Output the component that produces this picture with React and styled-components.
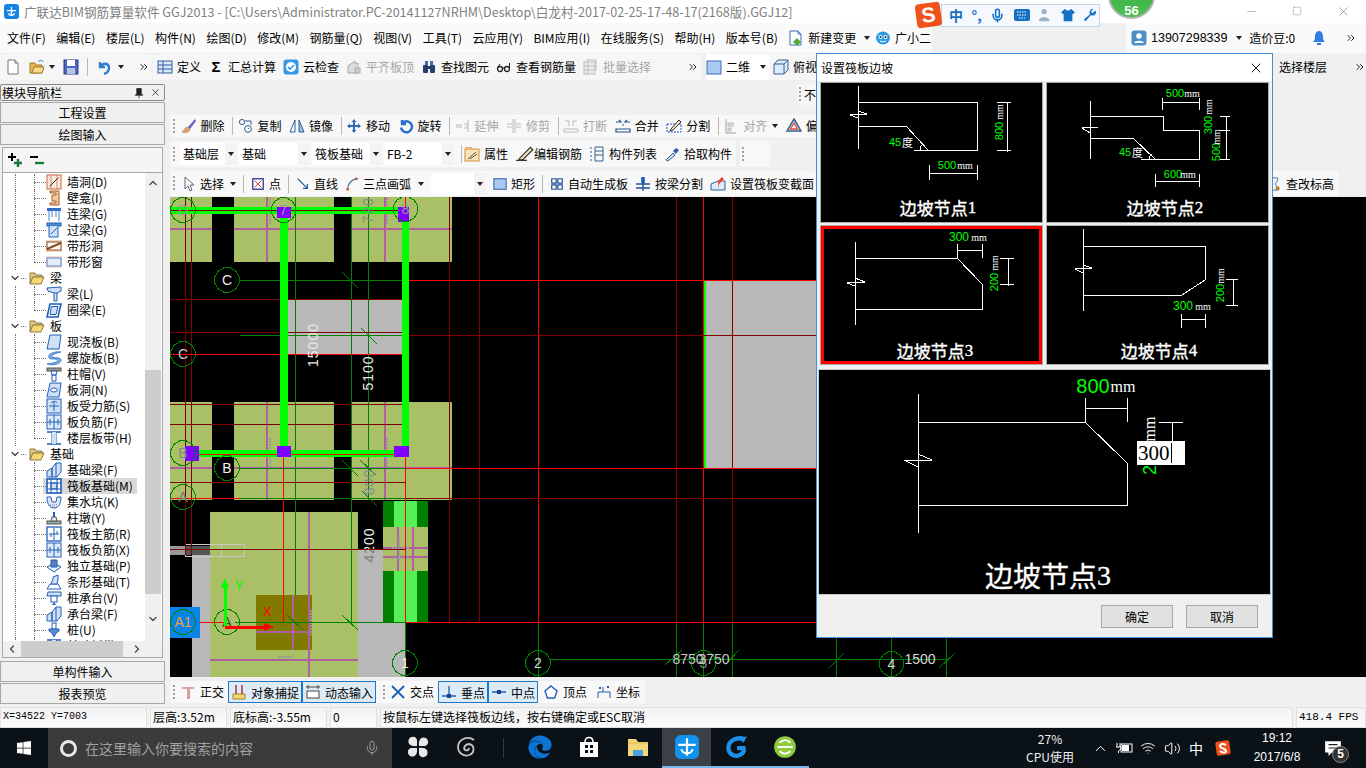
import React from 'react';
import styled, { createGlobalStyle } from 'styled-components';
import { FaWindows, FaEdge } from 'react-icons/fa';
import { Mic, ChevronUp, ChevronDown, ChevronLeft, ChevronRight, Wifi, Volume2, X, Minus, Square, ChevronsRight } from 'lucide-react';

const CJK = '"Noto Sans CJK SC", "Liberation Sans", sans-serif';
const LATIN = '"Liberation Sans", "Noto Sans CJK SC", sans-serif';
const RED = '#ff0000';
const DARK_RED = '#800000';
const AXIS = '#008000';
const LIME = '#00ff00';
const OLIVE = '#a9c066';
const CONCRETE = '#b8b8b8';
const PINK = '#b060a0';

const GlobalStyle = createGlobalStyle`
  html, body {
    margin: 0;
    padding: 0;
    background: #f0f0f0;
    overflow: hidden;
  }
  * {
    box-sizing: border-box;
  }
  body {
    font-family: ${CJK};
    font-size: 12px;
    color: #000;
  }
`;

/* ---------- small drawn icons, 16x16 ---------- */
const blue = '#1f5fb8';
const pale = '#cfe0f7';
const ICONS = {
  newDoc: <><path d="M3 1h7l3 3v11H3z" fill="#fff" stroke="#777" /><path d="M10 1v3h3" fill="#ddd" stroke="#777" /></>,
  open: <><path d="M1 14V4h5l1 2h6v8z" fill="#e8b94a" stroke="#9b7a2c" /><path d="M3 14l2-6h10l-2 6z" fill="#f8dc8a" stroke="#9b7a2c" /><path d="M9 3c2-2 4-2 5 0" fill="none" stroke="#3a6fb8" /></>,
  save: <><rect x="1" y="1" width="14" height="14" fill="#5066c0" stroke="#2a3a80" /><rect x="4" y="1" width="8" height="6" fill="#fff" /><rect x="4" y="9" width="8" height="6" fill="#b8c4e8" /></>,
  undo: <path d="M4 3v5h5M4 8c3-5 9-4 9 1 0 3-2 5-5 6" fill="none" stroke="#2f7fd0" strokeWidth="2.4" />,
  define: <><rect x="1" y="2" width="14" height="12" fill="#dbe8f8" stroke="#315f9e" /><path d="M1 6h14M1 10h14M6 2v12" stroke="#315f9e" /></>,
  cloud: <><rect x="0.5" y="0.5" width="15" height="15" rx="3" fill="#3a96de" /><circle cx="8" cy="8" r="5" fill="#fff" /><path d="M5 8l2 2 4-4" fill="none" stroke="#3a96de" strokeWidth="1.6" /></>,
  flush: <><path d="M2 14V7l7-5v3l3-1v10z" fill="#ddd" stroke="#aaa" /><rect x="9" y="9" width="5" height="5" fill="#ccc" stroke="#aaa" /></>,
  binocular: <><rect x="2" y="6" width="5" height="8" rx="1" fill="#25406f" /><rect x="9" y="6" width="5" height="8" rx="1" fill="#25406f" /><rect x="4" y="2" width="3" height="4" fill="#4a6ea8" /><rect x="9" y="2" width="3" height="4" fill="#4a6ea8" /><rect x="7" y="7" width="2" height="3" fill="#25406f" /></>,
  glasses: <><circle cx="4" cy="10" r="2.5" fill="none" stroke="#222" strokeWidth="1.3" /><circle cx="11" cy="10" r="2.5" fill="none" stroke="#222" strokeWidth="1.3" /><path d="M6 9h3M2 8l2-3M13.5 9.5V4" stroke="#222" fill="none" /></>,
  batch: <><rect x="1" y="3" width="11" height="12" fill="#eee" stroke="#bbb" /><path d="M1 7h11M1 11h11M5 3v12M3 1h10v10" stroke="#bbb" fill="none" /></>,
  twoD: <rect x="1" y="2" width="14" height="13" fill="#a9c8f2" stroke="#4070b8" />,
  cube: <><path d="M1 5l4-4h10v10l-4 4H1z" fill="#dcebf8" stroke="#35608f" /><path d="M1 5h10v10M11 5l4-4" fill="none" stroke="#35608f" /></>,
  change: <><path d="M2 1h8l3 3v11H2z" fill="#fff" stroke="#3a6fb8" /><path d="M10 1v3h3" fill="none" stroke="#3a6fb8" /><path d="M9 8l4 4-4 4-4-4z" fill="#5aa83a" /></>,
  buddy: <><ellipse cx="8" cy="8" rx="7" ry="6.5" fill="#2b9be8" /><circle cx="5.5" cy="7" r="2" fill="#fff" /><circle cx="10.5" cy="7" r="2" fill="#fff" /><circle cx="5.5" cy="7" r="1" fill="#123" /><circle cx="10.5" cy="7" r="1" fill="#123" /><path d="M5 11q3 2 6 0" fill="none" stroke="#fff" /></>,
  user: <><rect x="0.5" y="0.5" width="15" height="15" rx="3" fill="#4a90c8" /><circle cx="8" cy="6" r="2.8" fill="#fff" /><path d="M3 13c1-3 9-3 10 0z" fill="#fff" /></>,
  bell: <><path d="M8 1c3 0 4 3 4 6s1 4 2 5H2c1-1 2-2 2-5s1-6 4-6z" fill="#2f7fe0" /><rect x="6" y="13" width="4" height="2" fill="#2f7fe0" /></>,
  brush: <><path d="M14 1L7 9l2 2 6-8z" fill="#7060c0" /><path d="M7 9c-3 0-3 3-6 5 4 1 8 0 8-3z" fill="#e8a070" stroke="#9a5a30" strokeWidth=".5" /></>,
  copy: <><circle cx="4" cy="4" r="2.6" fill="none" stroke="#35608f" /><circle cx="10" cy="11" r="3.4" fill="none" stroke="#35608f" /><path d="M7 3h6v4" fill="none" stroke="#35608f" /><path d="M10 11l1-1" stroke="#35608f" /></>,
  mirror: <><path d="M1 14L6 2v12z" fill="#fff" stroke="#2e5a98" /><path d="M15 14L10 2v12z" fill="#9cc0ec" stroke="#2e5a98" /></>,
  move: <path d="M8 1l2.4 3H9v3h3V5.6L15 8l-3 2.4V9H9v3h1.4L8 15l-2.4-3H7V9H4v1.4L1 8l3-2.4V7h3V4H5.6z" fill="#2e6cb8" />,
  rotate: <path d="M4 2v4h4M4 5.5a5.5 5.5 0 1 1-1 4" fill="none" stroke="#2a6cd0" strokeWidth="2.4" />,
  extend: <path d="M1 7h6M1 9h6M9 6h3v4H9M13 2v12" fill="none" stroke="#bbb" />,
  trim: <path d="M1 6h5M1 9h5M10 6h5M10 9h5M7 1v14M9 1v14" fill="none" stroke="#bbb" />,
  breakIt: <><path d="M1 11h14v3H1z" fill="none" stroke="#bbb" /><path d="M2 3h4v5M14 3h-4v5" fill="none" stroke="#bbb" /></>,
  merge: <path d="M1 4h5l-2-2M15 4h-5l2-2M1 11h14v3H1zM7 7h2" fill="none" stroke="#28508f" strokeWidth="1.2" />,
  split: <><rect x="1" y="6" width="14" height="8" fill="none" stroke="#2050d8" strokeDasharray="2 1" /><path d="M5 11l8-9 2 2-8 8-3 1z" fill="#f8e8c0" stroke="#333" /></>,
  align: <><path d="M3 1v14h10" fill="none" stroke="#bbb" strokeWidth="1.4" /><rect x="5" y="5" width="5" height="3" fill="#ddd" stroke="#bbb" /><rect x="5" y="10" width="3" height="3" fill="#ddd" stroke="#bbb" /></>,
  offset: <><path d="M8 1l7 12H1z" fill="none" stroke="#35608f" strokeWidth="1.5" /><path d="M8 5l3.5 6h-7z" fill="none" stroke="#d84a3a" strokeWidth="1.3" /></>,
  attrs: <><rect x="1" y="3" width="14" height="12" fill="#f8e4b8" stroke="#d09040" /><path d="M4 13l8-7M6 13l7-5" stroke="#555" /><rect x="1" y="1" width="7" height="3" fill="#e8b86a" /></>,
  pencil: <path d="M1 13h9M4 11l9-9 2 2-8 8-4 1z" fill="#f4e2b8" stroke="#333" />,
  list: <path d="M1 2h2M1 6h2M1 10h2M1 14h2M6 1h8v14H6zM6 5h8M6 9h8" fill="none" stroke="#35608f" />,
  pick: <><path d="M2 14l7-7 2 2-7 6z" fill="#cde" stroke="#35608f" /><path d="M9 5l3-3 3 2-3 4z" fill="#2a5fa0" /></>,
  cursor: <path d="M5 1v12l3-3 2 5 2-1-2-5h4z" fill="#fff" stroke="#667" />,
  point: <><rect x="2" y="2" width="12" height="12" fill="#fff" stroke="#2a3f90" strokeWidth="1.5" /><path d="M4 4l8 8M12 4l-8 8" stroke="#d02030" /></>,
  line: <path d="M2 2l11 11M8 13h5V8" fill="none" stroke="#225f9e" strokeWidth="1.4" />,
  arc: <><path d="M3 14C3 8 7 3 13 2" fill="none" stroke="#35608f" strokeWidth="1.3" /><circle cx="3" cy="14" r="1.5" fill="#d04030" /><circle cx="13" cy="2" r="1.5" fill="#d04030" /></>,
  rect: <rect x="1" y="2" width="14" height="12" fill="#a9c8f2" stroke="#305fae" strokeWidth="1.2" />,
  auto: <path d="M2 2h5v5H2zM9 2h5v5H9zM2 9h5v5H2zM9 9h5v5H9z" fill="none" stroke="#20509a" strokeWidth="1.4" />,
  beamSplit: <><rect x="6" y="1" width="4" height="6" fill="#3a7fd8" /><path d="M1 8h14M1 12h14M8 1v14" stroke="#20509a" strokeWidth="1.4" /></>,
  section: <><path d="M1 8l7-3 7 0v9H1z" fill="#dcebf8" stroke="#2a5fa0" /><path d="M8 12V5l4-4 2 2-5 5" fill="#f04030" /></>,
  level: <><path d="M3 1h8v3L8 8l3 4v3H3" fill="none" stroke="#35608f" /><circle cx="11" cy="13" r="2.4" fill="#c08030" /></>,
  ortho: <path d="M2 3h12v2H10v10H7V5H2z" fill="#d8a0a0" />,
  snap: <><path d="M2 10h12v5H2z" fill="#f0d870" stroke="#a08030" /><path d="M5 1v9M11 1v9" stroke="#a02020" strokeWidth="1.3" /></>,
  dyn: <><path d="M1 3h14M3 1v4M13 1v4" stroke="#444" /><rect x="2" y="7" width="12" height="7" fill="#fff" stroke="#444" /></>,
  cross: <path d="M2 2l12 12M14 2L2 14" stroke="#1f5fb8" strokeWidth="1.8" />,
  perp: <><path d="M1 12h14M8 2v10" stroke="#1f5fb8" strokeWidth="1.3" /><rect x="6" y="10" width="4" height="4" fill="#1f3f90" /></>,
  mid: <><path d="M1 8h14" stroke="#1f5fb8" strokeWidth="1.5" /><rect x="6" y="6" width="4" height="4" fill="#1f3f90" /></>,
  vertex: <path d="M8 2l6 5-2.4 7H4.4L2 7z" fill="#fff" stroke="#1f5fb8" strokeWidth="1.4" />,
  coord: <path d="M2 14V8h5V3M7 8h7M14 8v6M3 3l2 2M5 3L3 5M11 2l2 2M13 2l-2 2" fill="none" stroke="#1f5fb8" />,
  plus: <><path d="M5 1v8M1 5h8" stroke="#000" strokeWidth="2" /><path d="M11 7v8M7 11h8" stroke="#1a7a3a" strokeWidth="2.4" /></>,
  minus: <><path d="M1 5h8" stroke="#000" strokeWidth="2" /><path d="M6 11h9" stroke="#1a7a3a" strokeWidth="2.4" /></>,
  pin: <path d="M5 2h6v7l2 2H3l2-2zM8 11v4" fill="#222" stroke="#222" />,
  wallHole: <><rect x="1" y="1" width="14" height="14" fill="#fde8dc" stroke="#c8663a" /><path d="M3 13L13 3M5 1v14M11 1v14" stroke="#c8663a" strokeWidth=".7" /><path d="M4 12l8-8" stroke="#333" /></>,
  niche: <path d="M4 1h9v14H4v-2h6v-2H6V5h4V3H4z" fill="#f5c8a0" stroke="#a85a20" />,
  linkBeam: <><rect x="1" y="2" width="14" height="3" fill="#2f6fc8" /><path d="M3 5v10M13 5v10M6 5v6M10 5v6" stroke="#6fa0e0" strokeWidth="1.3" /></>,
  lintel: <><rect x="1" y="1" width="14" height="3" fill="#4f8fe0" stroke={blue} /><path d="M3 4v11h9V4" fill={pale} stroke={blue} /><path d="M5 12l6-6" stroke={blue} /></>,
  stripHole: <><rect x="0" y="2" width="16" height="12" fill="#f2d8c4" /><rect x="1" y="4" width="14" height="8" fill="#fff" stroke="#8a4a20" /><path d="M1 11L15 5" stroke="#8a4a20" strokeWidth="2" /></>,
  stripWin: <><rect x="0" y="2" width="16" height="12" fill="#f8dcd8" /><rect x="1" y="4" width="14" height="8" fill="#e4edfb" stroke="#5a80d8" /></>,
  beam: <><path d="M1 2l14-1v4l-4 2v8H8V7L2 5z" fill={pale} stroke={blue} /><path d="M8 7h3" stroke={blue} /></>,
  ring: <><path d="M4 2h11l-3 13H1z" fill="#fff" stroke={blue} strokeWidth="1.6" /><path d="M5.5 4.5h6.5L10 12.5H4z" fill={pale} stroke={blue} /></>,
  slab: <path d="M4 1h11l-2 14H1z" fill={pale} stroke={blue} />,
  spiral: <path d="M15 2C8 1 1 4 3 8c1 2 8 0 9 2 0 2-5 3-11 4 6 2 14 0 14-4 0-3-7-2-9-3-1-2 4-4 9-5z" fill="#7ab0ea" stroke={blue} strokeWidth=".7" />,
  capital: <><rect x="1" y="2" width="14" height="3" fill="#9a9a9a" stroke="#555" /><path d="M5 5h6l-1 4H6zM6 9h4v6H6z" fill="#fff" stroke={blue} /></>,
  slabHole: <><path d="M4 1h11l-2 14H1z" fill={pale} stroke={blue} /><ellipse cx="8" cy="8" rx="3.4" ry="2" fill="#fff" stroke={blue} /></>,
  rebar: <><rect x="1" y="1" width="14" height="14" fill={pale} stroke={blue} /><path d="M8 3v10M3 8h10M5 5c2-2 6-2 6 0" fill="none" stroke={blue} /></>,
  negBar: <><rect x="1" y="1" width="14" height="14" fill="#dfeafb" stroke={blue} /><path d="M1 8h14M8 1v14M4 5v6M12 5v6" stroke={blue} /></>,
  band: <><path d="M1 2h14M1 14h14" stroke={blue} strokeWidth="1.4" /><path d="M6 2v12M10 2v12" stroke={blue} /><rect x="6" y="2" width="4" height="12" fill={pale} /></>,
  footBeam: <><path d="M1 15V9l5-3v9zM6 15V6l4-5h5v9l-4 5z" fill={pale} stroke={blue} /><path d="M10 1v14" stroke={blue} /></>,
  raft: <><rect x="1" y="1" width="14" height="14" fill="#fff" stroke={blue} strokeWidth="1.6" /><rect x="5" y="5" width="6" height="6" fill={pale} stroke={blue} /><path d="M1 5h14M1 11h14M5 1v14M11 1v14" stroke={blue} /></>,
  sump: <><path d="M1 3h4l1 5h4l1-5h4c0 6-2 11-7 11S1 9 1 3z" fill="#dce8f8" stroke={blue} /><path d="M4 11h8M6 13h4" stroke="#777" strokeDasharray="1 1" /></>,
  pier: <><rect x="1" y="11" width="14" height="3" fill="#9aa" stroke="#555" /><path d="M5 11l1-4h4l1 4z" fill="#eee" stroke="#555" /><rect x="7" y="2" width="2" height="5" fill={blue} /></>,
  mainBar: <><rect x="1" y="1" width="14" height="14" fill="#fff" stroke={blue} strokeWidth="1.3" /><path d="M8 2v12M3 8h10M5 8v3M11 5v3" stroke={blue} /></>,
  isolated: <><path d="M1 9l7-4 7 4-7 5z" fill="#e8eef8" stroke={blue} /><path d="M5 2h6v7H5z" fill="#5a7fb8" stroke={blue} /></>,
  strip: <><path d="M1 15l3-5h8l3 5z" fill="#fff" stroke={blue} /><path d="M5 10l2-5V3l5-2v4l-1 5z" fill={pale} stroke={blue} /></>,
  cap: <><path d="M2 2h13v4H1z" fill={pale} stroke={blue} /><rect x="5" y="6" width="6" height="6" fill="#fff" stroke={blue} /><path d="M8 12l-2 3h4z" fill={blue} /></>,
  pile: <><rect x="6" y="1" width="4" height="6" fill="#fff" stroke={blue} /><path d="M3 7h10v2l-3 2-2 4-2-4-3-2z" fill="#5a8fd8" stroke={blue} /></>,
};

const Ico = ({ name, size = 16 }) => (
  <IcoSvg viewBox="0 0 16 16" width={size} height={size}>{ICONS[name]}</IcoSvg>
);

const IcoSvg = styled.svg`
  display: block;
  flex: none;
`;

/* ---------- window chrome ---------- */
const Page = styled.div`
  position: relative;
  width: 1366px;
  height: 768px;
  overflow: hidden;
  display: flex;
  flex-direction: column;
  background: #f0f0f0;
`;

const TitleBar = styled.header`
  height: 23px;
  flex: none;
  display: flex;
  align-items: center;
  background: #fff;
  padding-left: 4px;
  color: #808080;
  line-height: 23px;
  white-space: nowrap;
`;

const AppLogo = styled.span`
  width: 15px;
  height: 15px;
  margin-right: 5px;
  border-radius: 3px;
  background: #1384e8;
  display: flex;
  align-items: center;
  justify-content: center;
`;

const TitleText = styled.span`
  font-size: 12.6px;
`;

const WinControls = styled.div`
  position: absolute;
  top: 0;
  right: 0;
  display: flex;
  color: #777;
`;

const WinControl = styled.span`
  width: 46px;
  height: 22px;
  display: flex;
  align-items: center;
  justify-content: center;
`;

const MenuBar = styled.nav`
  height: 30px;
  flex: none;
  display: flex;
  align-items: stretch;
  justify-content: space-between;
  white-space: nowrap;
  line-height: 16px;
  background: #f0f0f0;
`;

const MenuLeft = styled.div`
  width: 932px;
  display: flex;
  align-items: center;
  gap: 10.5px;
  padding-left: 7px;
  background: #fafafa;
`;

const MenuItem = styled.span`
  display: flex;
  align-items: center;
  gap: 4px;
  margin-right: ${p => p.$mr ?? 0}px;
`;

const MenuRight = styled.div`
  display: flex;
  align-items: center;
  gap: 4px;
  padding: 0 9px 0 5px;
  width: 240px;
  background: #fafafa;
`;

const Caret = styled.i`
  flex: none;
  width: 0;
  height: 0;
  margin-left: ${p => p.$ml ?? 6}px;
  border-left: 3px solid transparent;
  border-right: 3px solid transparent;
  border-top: 4px solid #222;
`;

const Phone = styled.span`
  font-family: ${LATIN};
  font-size: 12.5px;
`;

const More = styled(ChevronsRight)`
  flex: none;
  margin-left: auto;
  color: #222;
`;

const TopTools = styled.div`
  height: 28px;
  flex: none;
  display: flex;
  align-items: center;
  white-space: nowrap;
`;

const TopBand = styled.div`
  height: 26px;
  width: ${p => p.$w}px;
  flex: none;
  margin-left: ${p => p.$ml ?? 0}px;
  display: flex;
  align-items: center;
  gap: ${p => p.$gap ?? 7}px;
  padding-left: ${p => p.$pl ?? 4}px;
  padding-right: 2px;
  background: #f6f6f6;
  border-radius: 3px;
`;

const Tool = styled.span`
  display: flex;
  flex: none;
  align-items: center;
  gap: ${p => p.$gap ?? 4}px;
  height: ${p => (p.$boxed ? 26 : 20)}px;
  line-height: 20px;
  margin-left: ${p => p.$ml ?? 0}px;
  padding-right: ${p => (p.$boxed ? 3 : 0)}px;
  background: ${p => (p.$boxed ? '#fff' : 'transparent')};
  color: ${p => (p.$off ? '#a6a6a6' : '#000')};
`;

const Sigma = styled.b`
  width: 16px;
  font-family: ${LATIN};
  font-size: 15px;
  text-align: center;
`;

const Sep = styled.i`
  flex: none;
  width: 1px;
  height: 18px;
  margin-right: ${p => p.$mr ?? 0}px;
  background: #b9b9b9;
`;

const Grip = styled.i`
  flex: none;
  width: 2px;
  height: 15px;
  margin: 0 ${p => p.$mr ?? -2}px 0 ${p => p.$ml ?? 2}px;
  background: repeating-linear-gradient(to bottom, #a0a0a0 0 2px, transparent 2px 4px);
`;

/* ---------- layout of the main area ---------- */
const Main = styled.div`
  height: 625px;
  flex: none;
  display: flex;
`;

const LeftPanel = styled.aside`
  width: 165px;
  flex: none;
  display: flex;
  flex-direction: column;
  padding-top: 3px;
`;

const PanelHead = styled.div`
  height: 17px;
  flex: none;
  display: flex;
  align-items: center;
  padding: 0 3px 0 1px;
  gap: 5px;
  border: 1px solid #8a8a8a;
  border-radius: 2px;
  line-height: 15px;
`;

const PanelTitle = styled.span`
  margin-right: auto;
`;

const NavButton = styled.div`
  height: 21px;
  flex: none;
  margin-top: ${p => p.$mt ?? 1}px;
  border: 1px solid #a8a8a8;
  background: #f0f0f0;
  text-align: center;
  line-height: 19px;
`;

const TreeBox = styled.div`
  height: 511px;
  flex: none;
  margin: 2px 2px 0;
  display: flex;
  flex-direction: column;
  border: 1px solid #a8a8a8;
`;

const TreeTools = styled.div`
  height: 24px;
  flex: none;
  display: flex;
  align-items: center;
  gap: 6px;
  padding-left: 4px;
  background: #f5f5f5;
`;

const TreeArea = styled.div`
  flex: 1;
  min-height: 0;
  display: flex;
  background: #fff;
  border-top: 1px solid #a8a8a8;
`;

const TreeList = styled.ul`
  flex: 1;
  margin: 0;
  padding: 1px 0 0;
  list-style: none;
  overflow: hidden;
`;

const TreeRow = styled.li`
  position: relative;
  height: 16px;
  display: flex;
  align-items: center;
  padding-left: ${p => (p.$group ? 23 : 40)}px;
  line-height: 16px;
  white-space: nowrap;

  &::before {
    content: '';
    position: absolute;
    left: ${p => (p.$group ? 18 : 31)}px;
    top: 8px;
    width: ${p => (p.$group ? 5 : 12)}px;
    border-top: 1px dotted #777;
  }

  &::after {
    content: '';
    position: absolute;
    left: 31px;
    top: 0;
    height: ${p => (p.$last ? 8 : 16)}px;
    border-left: ${p => (p.$group ? 'none' : '1px dotted #777')};
  }
`;

const RootLine = styled.i`
  position: absolute;
  left: 12px;
  top: 0;
  height: 16px;
  border-left: 1px dotted #777;
`;

const Expander = styled(ChevronDown)`
  position: absolute;
  left: 6px;
  top: 2px;
  color: #444;
`;

const RowBody = styled.span`
  display: flex;
  align-items: center;
  gap: 5px;
  height: 16px;
  padding: 0 4px 0 3px;
  background: ${p => (p.$on ? '#d9d9d9' : 'transparent')};
`;

const Folder = styled.svg`
  flex: none;
  display: block;
`;

const VScroll = styled.div`
  width: 16px;
  flex: none;
  margin-right: 1px;
  display: flex;
  flex-direction: column;
  background: #f0f0f0;
  color: #555;
`;

const ScrollArrow = styled.span`
  height: ${p => p.$size}px;
  width: ${p => (p.$wide ? `${p.$wide}px` : 'auto')};
  flex: none;
  display: flex;
  align-items: center;
  justify-content: center;
`;

const VThumb = styled.div`
  height: 224px;
  flex: none;
  margin-top: 177px;
  background: #cdcdcd;
`;

const HScroll = styled.div`
  height: 16px;
  flex: none;
  display: flex;
  align-items: center;
  background: #f0f0f0;
  color: #555;
`;

const HThumb = styled.div`
  width: 102px;
  height: 16px;
  background: #cdcdcd;
`;

const WorkArea = styled.section`
  flex: 1;
  min-width: 0;
  margin-left: 5px;
  display: flex;
  flex-direction: column;
  white-space: nowrap;
`;

const StubRow = styled.div`
  height: 21px;
  flex: none;
  margin: 3px 0 10px 627px;
  width: 30px;
  display: flex;
  align-items: center;
  background: #f6f6f6;
`;

const ToolRow = styled.div`
  height: ${p => p.$h}px;
  flex: none;
  margin-top: ${p => p.$mt ?? 4}px;
  display: flex;
  align-items: stretch;
  justify-content: space-between;
  gap: 4px;
  padding-right: ${p => p.$pr ?? 0}px;
`;

const Band = styled.div`
  width: ${p => (p.$w ? `${p.$w}px` : 'auto')};
  flex: none;
  display: flex;
  align-items: center;
  gap: ${p => p.$gap ?? 7}px;
  padding-left: 1px;
  padding-right: 4px;
  background: #f8f8f8;
  border-radius: 3px;
`;

const Combo = styled.div`
  width: ${p => p.$w}px;
  height: 22px;
  flex: none;
  margin-right: ${p => p.$mr ?? 0}px;
  margin-left: ${p => p.$ml ?? 0}px;
  display: flex;
  align-items: center;
  justify-content: space-between;
  padding-left: 3px;
  background: #fff;
  line-height: 22px;
`;

const ComboArrow = styled.span`
  width: 12px;
  height: 22px;
  display: flex;
  align-items: center;
  justify-content: center;
  background: #f3f3f3;
`;

const ToolRowSpacer = styled.div`
  flex: 1;
`;

const StubBand = styled.div`
  width: 30px;
  flex: none;
  background: #f8f8f8;
  border-radius: 3px;
  display: flex;
  align-items: center;
`;

const CanvasWrap = styled.div`
  height: 480px;
  flex: none;
  margin-top: 1px;
  background: #000;
`;

const CanvasSvg = styled.svg`
  display: block;
  shape-rendering: crispEdges;
`;

const BottomBand = styled.div`
  height: 22px;
  width: 475px;
  flex: none;
  margin-top: 4px;
  display: flex;
  align-items: center;
  gap: 4px;
  padding-left: 1px;
  background: #f8f8f8;
`;

const Toggle = styled.span`
  display: flex;
  align-items: center;
  gap: 4px;
  height: 22px;
  padding: 0 2px;
  border: 1px solid #1979c9;
  background: #dcebf7;
  margin-right: ${p => p.$mr ?? -4}px;
`;

/* ---------- status + taskbar ---------- */
const StatusBar = styled.footer`
  height: 21px;
  flex: none;
  margin-top: 1px;
  display: flex;
  gap: 3px;
  white-space: nowrap;
`;

const StatusCell = styled.div`
  width: ${p => (p.$w ? `${p.$w}px` : 'auto')};
  flex: ${p => (p.$w ? 'none' : 1)};
  padding-left: 2px;
  border: 1px solid #e0e0e0;
  background: linear-gradient(#f2f2f2, #fcfcfc);
  line-height: 18px;
  font-size: ${p => p.$size ?? 12}px;
  font-family: ${p => (p.$mono ? '"Liberation Mono", monospace' : CJK)};
`;

const TaskBar = styled.div`
  height: 40px;
  flex: none;
  display: flex;
  align-items: stretch;
  background: #0a1218;
  color: #fff;
`;

const StartSlot = styled.div`
  width: 48px;
  flex: none;
  display: flex;
  align-items: center;
  justify-content: center;
`;

const SearchBox = styled.div`
  width: 344px;
  flex: none;
  margin-right: 1px;
  display: flex;
  align-items: center;
  padding: 0 12px;
  gap: 8px;
  background: #3b3b3b;
  color: #a0a0a0;
  font-size: 14px;
`;

const Cortana = styled.i`
  width: 17px;
  height: 17px;
  flex: none;
  border: 3px solid #e8e8e8;
  border-radius: 50%;
`;

const SearchText = styled.span`
  flex: 1;
`;

const TaskSlot = styled.div`
  width: 49px;
  flex: none;
  display: flex;
  align-items: center;
  justify-content: center;
  border-bottom: 2px solid ${p => (p.$open ? '#79b8ee' : 'transparent')};
  background: ${p => (p.$active ? '#3a4046' : 'transparent')};
`;

const TaskDivider = styled.div`
  width: 24px;
  flex: none;
  display: flex;
  align-items: center;
  justify-content: center;

  &::before {
    content: '';
    width: 1px;
    height: 20px;
    background: #3a3a3a;
  }
`;

const Tray = styled.div`
  margin-left: auto;
  display: flex;
  align-items: center;
`;

const CpuMeter = styled.div`
  width: 60px;
  margin-right: 8px;
  text-align: center;
  line-height: 18px;
  font-size: 12px;
  color: #f0f0f0;
`;

const TrayCell = styled.span`
  width: ${p => p.$w ?? 24}px;
  height: 40px;
  flex: none;
  display: flex;
  align-items: center;
  justify-content: center;
  font-size: 14px;
`;

const Clock = styled.div`
  width: 80px;
  flex: none;
  text-align: center;
  line-height: 19px;
  font-size: 12px;
  font-family: ${LATIN};
`;

const Notify = styled.div`
  position: relative;
  width: 49px;
  height: 40px;
  flex: none;
  display: flex;
  align-items: center;
  justify-content: center;
  padding-right: 18px;
`;

const NotifyBadge = styled.span`
  position: absolute;
  left: 15px;
  top: 18px;
  width: 17px;
  height: 17px;
  border-radius: 50%;
  background: #333;
  border: 1px solid #888;
  font-family: ${LATIN};
  font-size: 12px;
  font-weight: 700;
  line-height: 15px;
  text-align: center;
`;

/* ---------- overlays ---------- */
const ImeBar = styled.div`
  position: absolute;
  left: 916px;
  top: 3px;
  display: flex;
  align-items: center;
  height: 24px;
`;

const ImeLogo = styled.span`
  width: 25px;
  height: 24px;
  border-radius: 4px;
  background: #f0521c;
  color: #fff;
  font: 700 21px/24px ${LATIN};
  text-align: center;
  transform: rotate(-8deg);
  z-index: 1;
`;

const ImeTray = styled.div`
  width: 159px;
  height: 23px;
  display: flex;
  align-items: center;
  gap: 8.5px;
  padding-left: 7px;
  background: #f5f8fc;
  border: 1px solid #c5d5e8;
  color: #1671c4;
  font-size: 14px;
  font-weight: 700;
`;

const ScoreBall = styled.div`
  position: absolute;
  left: 1108px;
  top: -28px;
  width: 47px;
  height: 47px;
  border-radius: 50%;
  background: linear-gradient(#2ea84a, #4dc04e);
  border: 2px solid #b5b5b5;
  color: #fff;
  font: 700 13px/74px ${LATIN};
  text-align: center;
`;

const Dialog = styled.div`
  position: absolute;
  left: 816px;
  top: 53px;
  width: 457px;
  height: 585px;
  display: flex;
  flex-direction: column;
  background: #f0f0f0;
  border: 1px solid #3f8fdc;
`;

const DialogTitle = styled.div`
  height: 27px;
  flex: none;
  display: flex;
  align-items: center;
  justify-content: space-between;
  padding: 0 8px 0 4px;
  background: #fff;
  line-height: 27px;
  font-size: 12px;
`;

const NodeGrid = styled.div`
  flex: none;
  display: grid;
  grid-template-columns: 221px 221px;
  grid-template-rows: 139px 138px;
  column-gap: 5px;
  row-gap: 4px;
  padding: 2px 0 0 4px;
`;

const NodeCard = styled.div`
  background: #000;
  outline: 1px solid #a9a9a9;
  border: ${p => (p.$on ? `3px solid ${RED}` : 'none')};
  overflow: hidden;
`;

const NodeSvg = styled.svg`
  display: block;
  shape-rendering: crispEdges;
`;

const Preview = styled.div`
  position: relative;
  height: 224px;
  flex: none;
  margin: 6px 2px 0;
  background: #000;
  outline: 1px solid #c8c8c8;
`;

const SizeInput = styled.div`
  position: absolute;
  left: 318px;
  top: 71px;
  width: 48px;
  height: 24px;
  background: #fff;
  color: #000;
  font: 21px/24px "Liberation Serif", serif;
  padding-left: 1px;
  display: flex;
  align-items: center;
`;

const InputCaret = styled.i`
  width: 1px;
  height: 20px;
  margin-left: 1px;
  background: #000;
`;

const DialogFoot = styled.div`
  flex: 1;
  display: flex;
  justify-content: flex-end;
  gap: 13px;
  padding: 11px 14px 0 0;
`;

const DialogButton = styled.button`
  width: 72px;
  height: 23px;
  padding: 0;
  border: 1px solid #a8a8a8;
  background: #e1e1e1;
  font: 12px/21px ${CJK};
  color: #000;
`;

/* ---------- CAD canvas data (page coordinates) ---------- */
const olive = [
  [170, 197, 42, 65], [234, 197, 100, 65], [352, 197, 100, 65],
  [170, 402, 42, 98], [234, 402, 100, 98], [352, 402, 100, 98],
  [210, 512, 148, 166],
];
const concrete = [
  [192, 555, 18, 123], [358, 549, 47, 129], [288, 299, 114, 55], [703, 280, 113, 188],
];
const pinkLines = [
  [170, 229, 212, 229], [234, 229, 334, 229], [352, 229, 452, 229], [267, 197, 267, 262], [385, 197, 385, 262],
  [170, 468, 212, 468], [234, 468, 334, 468], [352, 468, 452, 468], [267, 402, 267, 500], [385, 402, 385, 500],
  [210, 660, 358, 660], [309, 512, 309, 678], [293, 595, 293, 650], [256, 632, 312, 632],
  [398, 527, 398, 571], [413, 527, 413, 571], [383, 548, 428, 548], [383, 557, 428, 557],
];
const thinLines = [
  [185, 197, 185, 555, DARK_RED], [191.5, 197, 191.5, 555, DARK_RED],
  [283.5, 214, 283.5, 622, RED], [295.5, 197, 295.5, 595, AXIS],
  [351, 197, 351, 622, AXIS], [368, 197, 368, 500, AXIS],
  [405.5, 197, 405.5, 622, RED], [405.5, 622, 405.5, 677, AXIS],
  [449.5, 197, 449.5, 622, DARK_RED], [479, 197, 479, 622, DARK_RED],
  [538.5, 197, 538.5, 622, RED], [538.5, 622, 538.5, 677, AXIS],
  [676.5, 197, 676.5, 622, DARK_RED], [676.5, 622, 676.5, 677, AXIS],
  [703.5, 197, 703.5, 622, RED], [703.5, 622, 703.5, 677, AXIS],
  [732, 197, 732, 622, DARK_RED], [732, 622, 732, 677, AXIS],
  [836.5, 622, 836.5, 677, AXIS], [891.5, 622, 891.5, 677, AXIS], [946.5, 622, 946.5, 677, AXIS],
  [239, 280, 406, 280, AXIS], [406, 280, 816, 280, RED],
  [170, 299, 406, 299, DARK_RED], [170, 332, 406, 332, DARK_RED],
  [240, 335, 406, 335, AXIS], [406, 335, 816, 335, DARK_RED],
  [170, 354, 406, 354, RED], [170, 404, 406, 404, DARK_RED], [170, 424, 406, 424, DARK_RED],
  [238, 468, 406, 468, AXIS], [406, 468, 816, 468, RED],
  [170, 482, 406, 482, DARK_RED],
  [170, 498, 240, 498, RED], [240, 498, 406, 498, AXIS], [406, 498, 816, 498, DARK_RED],
  [170, 549, 406, 549, DARK_RED],
  [170, 622, 225, 622, RED], [235, 622, 406, 622, AXIS], [406, 622, 816, 622, RED],
  [550, 659, 946, 659, AXIS],
];
const ticks = [
  [342, 272, 358, 288], [361, 328, 377, 344], [342, 460, 358, 476], [360, 460, 376, 475], [362, 491, 377, 506],
  [287, 615, 303, 630], [342, 615, 358, 630], [665, 665, 682, 650], [725, 665, 739, 650],
  [829, 668, 844, 653], [939, 668, 955, 653],
];
const bubbles = [
  [183, 210, 'D', '#9a9a9a'], [283.5, 210, '7', '#999'], [405.5, 209, '8', '#999'],
  [227, 280, 'C', '#e8e8e8'], [183, 354, 'C', '#c8c8c8'], [183, 453, 'B', '#888'],
  [227, 468, 'B', '#f0f0f0'], [183, 497, 'A', '#777'], [183, 622, 'A1', '#f0a030'],
  [227, 622, 'A', '#444'], [405, 663, '1', '#f0f0f0'], [538, 663, '2', '#d8d8d8'],
  [703.5, 663, '3', '#888'], [891.5, 664, '4', '#d8d8d8'],
];
const dimTexts = [
  [313, 345, '15000', 1, '#e8e8e8'], [368, 373, '5100', 1, '#e8e8e8'], [368, 206, '7200', 1, '#8a8a8a'],
  [369, 482, '800', 1, '#8a8a9a'],
  [688, 659, '8750', 0, '#c8c8c8'], [714, 659, '3750', 0, '#c8c8c8'], [920, 659, '1500', 0, '#d8d8d8'],
];

const gonPoints = (cx, cy, r) => Array.from({ length: 12 }, (_, i) => {
  const a = (Math.PI * i) / 6 + Math.PI / 12;
  return `${(cx + r * Math.cos(a)).toFixed(1)},${(cy + r * Math.sin(a)).toFixed(1)}`;
}).join(' ');

const Line = ({ d }) => (
  <line x1={d[0]} y1={d[1]} x2={d[2]} y2={d[3]} stroke={d[4]} strokeWidth="1" />
);

const DimText = ({ x, y, fill, children }) => (
  <text
    x={x}
    y={y}
    fill={fill}
    fontFamily="Liberation Sans"
    fontSize="14"
    letterSpacing="1"
    textAnchor="middle"
    dominantBaseline="central"
    transform={`rotate(-90 ${x} ${y})`}
  >
    {children}
  </text>
);

const CadCanvas = () => (
  <CanvasSvg viewBox="170 197 1196 480" width="1196" height="480">
    <defs>
      <clipPath id="belowSill"><rect x="358" y="549" width="25" height="30" /></clipPath>
    </defs>
    {olive.map((r, i) => <rect key={i} x={r[0]} y={r[1]} width={r[2]} height={r[3]} fill={OLIVE} />)}
    {concrete.map((r, i) => <rect key={i} x={r[0]} y={r[1]} width={r[2]} height={r[3]} fill={CONCRETE} />)}
    <rect x="703" y="280" width="3" height="188" fill={LIME} />
    <rect x="256" y="595" width="56" height="55" fill="#807a00" />
    <rect x="383" y="501" width="45" height="26" fill={AXIS} />
    <rect x="394" y="501" width="23" height="26" fill="#55f055" />
    <rect x="383" y="527" width="45" height="44" fill={OLIVE} />
    <rect x="383" y="571" width="45" height="51" fill={AXIS} />
    <rect x="394" y="571" width="23" height="51" fill="#55f055" />
    <rect x="170" y="546" width="15" height="9" fill="#999" />
    <rect x="185" y="546" width="25" height="9" fill="#555" />
    <rect x="185" y="544" width="36" height="12" fill="none" stroke="#c8c8c8" />
    <rect x="221" y="544" width="23" height="12" fill="none" stroke="#c8c8c8" />
    {pinkLines.map((p, i) => <line key={i} x1={p[0]} y1={p[1]} x2={p[2]} y2={p[3]} stroke={PINK} strokeWidth="1.5" />)}
    <path d="M269.5 198v27M387 198v27M269.5 438v30M387 438v30M311 610v25M278 657h14M399 535v30M392 548h18M392 558h18" stroke="#999" strokeWidth="2" strokeDasharray="2 1" fill="none" />
    {thinLines.map((d, i) => <Line key={i} d={d} />)}
    {ticks.map((t, i) => <line key={i} x1={t[0]} y1={t[1]} x2={t[2]} y2={t[3]} stroke={AXIS} />)}
    <rect x="280" y="212" width="8" height="238" fill={LIME} />
    <rect x="402" y="212" width="7" height="238" fill={LIME} />
    <rect x="170" y="207" width="236" height="7" fill={LIME} />
    <rect x="186" y="450" width="220" height="7" fill={LIME} />
    <line x1="170" y1="210.5" x2="406" y2="210.5" stroke={DARK_RED} />
    <line x1="186" y1="454" x2="406" y2="454" stroke={RED} />
    <rect x="277" y="207" width="14" height="11" fill="#8000ff" />
    <rect x="398" y="207" width="11" height="15" fill="#8000ff" />
    <rect x="277" y="446" width="14" height="11" fill="#8000ff" />
    <rect x="394" y="446" width="15" height="11" fill="#8000ff" />
    <rect x="185" y="446" width="14" height="15" fill="#8000ff" />
    <rect x="170" y="607" width="30" height="31" fill="#0a84e8" />
    {bubbles.map((b, i) => (
      <g key={i}>
        <polygon points={gonPoints(b[0], b[1], 12.5)} fill="none" stroke={AXIS} />
        <text x={b[0]} y={b[1] + 5} fill={b[3]} fontFamily="Liberation Sans" fontSize="14" textAnchor="middle">{b[2]}</text>
      </g>
    ))}
    {dimTexts.map((t, i) => (t[3]
      ? <DimText key={i} x={t[0]} y={t[1]} fill={t[4]}>{t[2]}</DimText>
      : <text key={i} x={t[0]} y={t[1]} fill={t[4]} fontFamily="Liberation Sans" fontSize="14" textAnchor="middle" dominantBaseline="central">{t[2]}</text>))}
    <DimText x={369} y={545} fill="#f0f0f0">4200</DimText>
    <g clipPath="url(#belowSill)">
      <rect x="358" y="549" width="25" height="30" fill={CONCRETE} />
      <DimText x={369} y={545} fill="#808080">4200</DimText>
    </g>
    <path d="M225 627V586" stroke={LIME} strokeWidth="3" />
    <path d="M225 578l4 10h-8z" fill={LIME} />
    <path d="M225 627h40" stroke={RED} strokeWidth="3" />
    <path d="M274 627l-10-4v8z" fill={RED} />
    <text x="239" y="590" fill={LIME} fontFamily="Liberation Sans" fontSize="13" textAnchor="middle">Y</text>
    <text x="267" y="616" fill={RED} fontFamily="Liberation Sans" fontSize="13" textAnchor="middle">X</text>
    <path d="M358 549h25" stroke={DARK_RED} />
  </CanvasSvg>
);

/* ---------- slope node drawings ---------- */
const Cad = ({ d, w = 1 }) => <path d={d} fill="none" stroke="#fff" strokeWidth={w} />;

const Label = ({ x, y, v, mm, rot, size = 11, mx }) => (
  <g transform={rot ? `rotate(-90 ${x} ${y})` : undefined}>
    <text x={x} y={y} fill={LIME} fontFamily="Liberation Sans" fontSize={size} textAnchor="middle" dominantBaseline="central">{v}</text>
    {mm && <text x={x + (mx ?? 22)} y={y} fill="#fff" fontFamily="Liberation Serif" fontSize="10" textAnchor="middle" dominantBaseline="central">mm</text>}
  </g>
);

const Caption = ({ x, y = 124, n, size = 17, heavy = 0.35 }) => (
  <text x={x} y={y} fill="#fff" stroke="#fff" strokeWidth={heavy} fontFamily="Noto Sans CJK SC" fontSize={size} textAnchor="middle" dominantBaseline="central">
    边坡节点<tspan fontFamily="Liberation Serif">{n}</tspan>
  </text>
);

const Degree = ({ x, y }) => (
  <g>
    <text x={x} y={y} fill={LIME} fontFamily="Liberation Sans" fontSize="11" dominantBaseline="central">45</text>
    <text x={x + 13} y={y} fill="#fff" fontFamily="Noto Sans CJK SC" fontSize="11" dominantBaseline="central">度</text>
  </g>
);

const Node1 = () => (
  <NodeSvg viewBox="0 0 221 139" width="221" height="139">
    <Cad d="M37 3V66M37 19H156V67H93M37 43H85L107 67M37 28L46 31L29 32L37 35" />
    <Cad d="M99 67a6 6 0 0 1 4-6M186 19V69M176 19H190M176 67H190M108 82V97M156 82V97M108 90H156" />
    <Label x={178} y={48} v="800" rot mm mx={19} />
    <Degree x={68} y={59} />
    <Label x={126} y={82} v="500" mm mx={18} />
    <Caption x={117} n="1" />
  </NodeSvg>
);

const Node2 = () => (
  <NodeSvg viewBox="0 0 221 139" width="221" height="139">
    <Cad d="M43 18V76M43 33H116V47H152V76H94M43 55H86L108 76M43 45L51 44L35 45L43 50" />
    <Cad d="M102 76a6 6 0 0 1 3-5M115 15V27M152 15V27M115 19H152M179 33V77M173 33H183M173 47H183M173 76H183M108 91V104M152 91V104M108 98H152" />
    <Label x={128} y={10} v="500" mm mx={17} />
    <Label x={161} y={42} v="300" rot mm mx={18} />
    <Label x={169} y={69} v="500" rot mm mx={15} />
    <Degree x={72} y={69} />
    <Label x={126} y={91} v="600" mm mx={15} />
    <Caption x={118} n="2" />
  </NodeSvg>
);

const Node3 = () => (
  <NodeSvg viewBox="3 3 215 132" width="215" height="132">
    <Cad d="M34 16V99M34 32H136L161 58V83H34M34 52L44 56L26 57L34 60" />
    <Cad d="M136 18V32M161 18V32M136 24H161M187 32V60M179 32H193M179 58H193" />
    <Label x={138} y={11} v="300" size={12} mm mx={20} />
    <Label x={173} y={56} v="200" rot mm mx={19} />
    <Caption x={114} n="3" />
  </NodeSvg>
);

const Node4 = () => (
  <NodeSvg viewBox="0 0 221 138" width="221" height="138">
    <Cad d="M36 3V85M36 20H158V54L135 69H36M36 39L45 42L28 43L36 47" />
    <Cad d="M186 53V79M179 53H191M179 79H191M134 88V102M158 88V102M134 93H158" />
    <Label x={173} y={67} v="200" rot mm mx={17} />
    <Label x={136} y={80} v="300" size={12} mm mx={20} />
    <Caption x={112} n="4" />
  </NodeSvg>
);

const LargeNode = () => (
  <NodeSvg viewBox="0 0 451 224" width="451" height="224">
    <Cad d="M99 24V163M99 52H266L308 93V135H99M99 84L113 90L85 90L99 97" />
    <Cad d="M266 28V52M308 28V52M266 38H308M353 52V71M340 52H364" />
    <Label x={274} y={16} v="800" size={20} />
    <text x={304} y={16} fill="#fff" fontFamily="Liberation Serif" fontSize="16" textAnchor="middle" dominantBaseline="central">mm</text>
    <text x={330} y={59} fill="#fff" fontFamily="Liberation Serif" fontSize="16" textAnchor="middle" dominantBaseline="central" transform="rotate(-90 330 59)">mm</text>
    <text x={331} y={100} fill={LIME} fontFamily="Liberation Sans" fontSize="18" textAnchor="middle" dominantBaseline="central" transform="rotate(-90 331 100)">2</text>
    <Caption x={229} y={205} n="3" size={28} heavy={0.3} />
  </NodeSvg>
);

/* ---------- data ---------- */
const MENU = ['文件(F)', '编辑(E)', '楼层(L)', '构件(N)', '绘图(D)', '修改(M)', '钢筋量(Q)', '视图(V)', '工具(T)', '云应用(Y)', 'BIM应用(I)', '在线服务(S)', '帮助(H)', '版本号(B)'];

const TREE = [
  { icon: 'wallHole', label: '墙洞(D)' },
  { icon: 'niche', label: '壁龛(I)' },
  { icon: 'linkBeam', label: '连梁(G)' },
  { icon: 'lintel', label: '过梁(G)' },
  { icon: 'stripHole', label: '带形洞' },
  { icon: 'stripWin', label: '带形窗', last: true },
  { group: true, label: '梁' },
  { icon: 'beam', label: '梁(L)' },
  { icon: 'ring', label: '圈梁(E)', last: true },
  { group: true, label: '板' },
  { icon: 'slab', label: '现浇板(B)' },
  { icon: 'spiral', label: '螺旋板(B)' },
  { icon: 'capital', label: '柱帽(V)' },
  { icon: 'slabHole', label: '板洞(N)' },
  { icon: 'rebar', label: '板受力筋(S)' },
  { icon: 'negBar', label: '板负筋(F)' },
  { icon: 'band', label: '楼层板带(H)', last: true },
  { group: true, label: '基础' },
  { icon: 'footBeam', label: '基础梁(F)' },
  { icon: 'raft', label: '筏板基础(M)', on: true },
  { icon: 'sump', label: '集水坑(K)' },
  { icon: 'pier', label: '柱墩(Y)' },
  { icon: 'mainBar', label: '筏板主筋(R)' },
  { icon: 'negBar', label: '筏板负筋(X)' },
  { icon: 'isolated', label: '独立基础(P)' },
  { icon: 'strip', label: '条形基础(T)' },
  { icon: 'cap', label: '桩承台(V)' },
  { icon: 'footBeam', label: '承台梁(F)' },
  { icon: 'pile', label: '桩(U)' },
  { icon: 'band', label: '基础板带(W)' },
];

const EDIT_TOOLS = [
  ['brush', '删除'], 'sep', ['copy', '复制'], ['mirror', '镜像'], 'sep', ['move', '移动'], ['rotate', '旋转'], 'sep',
  ['extend', '延伸', true], ['trim', '修剪', true], 'sep', ['breakIt', '打断', true], ['merge', '合并'], ['split', '分割'], 'sep',
];

const TreeItem = ({ item }) => (
  <TreeRow $group={item.group} $last={item.last}>
    {item.group ? <Expander size={12} strokeWidth={2.5} /> : <RootLine />}
    <RowBody $on={item.on}>
      {item.group ? (
        <Folder viewBox="0 0 16 14" width="16" height="14">
          <path d="M1 13V2h5l1 2h6v2H4L1 13z" fill="#e8c878" stroke="#8a7a50" />
          <path d="M1 13l3-7h11l-3 7z" fill="#f8d870" stroke="#8a7a50" />
        </Folder>
      ) : (
        <Ico name={item.icon} />
      )}
      {item.label}
    </RowBody>
  </TreeRow>
);

const App = () => (
  <Page>
    <GlobalStyle />
    <TitleBar>
      <AppLogo>
        <svg viewBox="0 0 12 12" width="11" height="11">
          <path d="M6 1v10M1 5h10M3 8c0 3 6 3 6 0" fill="none" stroke="#fff" strokeWidth="1.5" />
        </svg>
      </AppLogo>
      <TitleText>广联达BIM钢筋算量软件 GGJ2013 - [C:\Users\Administrator.PC-20141127NRHM\Desktop\白龙村-2017-02-25-17-48-17(2168版).GGJ12]</TitleText>
    </TitleBar>
    <WinControls>
      <WinControl><Minus size={13} strokeWidth={1} /></WinControl>
      <WinControl><Square size={10} strokeWidth={1} /></WinControl>
      <WinControl><X size={15} strokeWidth={1} /></WinControl>
    </WinControls>

    <MenuBar>
      <MenuLeft>
        {MENU.map(m => <MenuItem key={m}>{m}</MenuItem>)}
        <MenuItem $mr={-6}><Ico name="change" />新建变更<Caret $ml={4} /></MenuItem>
        <MenuItem><Ico name="buddy" />广小二</MenuItem>
      </MenuLeft>
      <MenuRight>
        <Ico name="user" />
        <Phone>13907298339</Phone>
        <Caret $ml={5} />
        <MenuItem $mr={12}>&nbsp;造价豆:0</MenuItem>
        <Ico name="bell" />
        <More size={12} />
      </MenuRight>
    </MenuBar>

    <TopTools>
      <TopBand $w={152} $pl={5} $gap={8}>
        <Ico name="newDoc" />
        <Tool><Ico name="open" /><Caret $ml={0} /></Tool>
        <Ico name="save" />
        <Sep />
        <Tool><Ico name="undo" /><Caret $ml={2} /></Tool>
        <More size={12} />
      </TopBand>
      <TopBand $w={548} $ml={1}>
        <Tool><Ico name="define" />定义</Tool>
        <Tool><Sigma>Σ</Sigma>汇总计算</Tool>
        <Tool><Ico name="cloud" />云检查</Tool>
        <Tool $off><Ico name="flush" />平齐板顶</Tool>
        <Tool><Ico name="binocular" />查找图元</Tool>
        <Tool><Ico name="glasses" />查看钢筋量</Tool>
        <Tool $off><Ico name="batch" />批量选择</Tool>
        <More size={12} />
      </TopBand>
      <TopBand $w={400} $ml={5} $gap={4} $pl={0}>
        <Tool $boxed><Ico name="twoD" />二维<Caret $ml={6} /></Tool>
        <Tool><Ico name="cube" />俯视</Tool>
      </TopBand>
      <Tool $ml={173}>选择楼层</Tool>
      <More size={12} />
    </TopTools>

    <Main>
      <LeftPanel>
        <PanelHead>
          <PanelTitle>模块导航栏</PanelTitle>
          <Ico name="pin" size={12} />
          <X size={11} strokeWidth={1.5} />
        </PanelHead>
        <NavButton>工程设置</NavButton>
        <NavButton>绘图输入</NavButton>
        <TreeBox>
          <TreeTools>
            <Ico name="plus" />
            <Ico name="minus" />
          </TreeTools>
          <TreeArea>
            <TreeList>
              {TREE.map(item => <TreeItem key={item.label} item={item} />)}
            </TreeList>
            <VScroll>
              <ScrollArrow $size={20}><ChevronUp size={12} strokeWidth={3} /></ScrollArrow>
              <VThumb />
              <ScrollArrow $size={49}><ChevronDown size={12} strokeWidth={3} /></ScrollArrow>
            </VScroll>
          </TreeArea>
          <HScroll>
            <ScrollArrow $size={16} $wide={18}><ChevronLeft size={12} strokeWidth={3} /></ScrollArrow>
            <HThumb />
            <ScrollArrow $size={16} $wide={28}><ChevronRight size={12} strokeWidth={3} /></ScrollArrow>
          </HScroll>
        </TreeBox>
        <NavButton $mt={3}>单构件输入</NavButton>
        <NavButton $mt={1}>报表预览</NavButton>
      </LeftPanel>

      <WorkArea>
        <StubRow><Grip $mr={3} />不</StubRow>
        <ToolRow $h={22} $mt={0}>
          <Band $w={700} $gap={7.5}>
            <Grip />
            {EDIT_TOOLS.map((t, i) => (t === 'sep'
              ? <Sep key={i} $mr={-3} />
              : <Tool key={t[1]} $off={t[2]}><Ico name={t[0]} />{t[1]}</Tool>))}
            <Tool $off><Ico name="align" />对齐<Caret $ml={1} /></Tool>
            <Tool><Ico name="offset" />偏移</Tool>
          </Band>
        </ToolRow>
        <ToolRow $h={26}>
          <Band $w={566}>
            <Grip />
            <Combo $w={57} $mr={2}>基础层<ComboArrow><Caret $ml={0} /></ComboArrow></Combo>
            <Combo $w={71} $mr={2} $ml={-7}>基础<ComboArrow><Caret $ml={0} /></ComboArrow></Combo>
            <Combo $w={70} $mr={2} $ml={-7}>筏板基础<ComboArrow><Caret $ml={0} /></ComboArrow></Combo>
            <Combo $w={70} $ml={-7}>FB-2<ComboArrow><Caret $ml={0} /></ComboArrow></Combo>
            <Sep $mr={-5} />
            <Tool><Ico name="attrs" />属性</Tool>
            <Tool $gap={0}><Ico name="pencil" size={19} />编辑钢筋</Tool>
            <Tool><Ico name="list" />构件列表</Tool>
            <Tool><Ico name="pick" />拾取构件</Tool>
          </Band>
          <StubBand><Grip $mr={0} /></StubBand>
          <ToolRowSpacer />
        </ToolRow>
        <ToolRow $h={25} $pr={28}>
          <Band $w={646}>
            <Grip />
            <Tool><Ico name="cursor" />选择<Caret $ml={2} /></Tool>
            <Sep />
            <Tool><Ico name="point" size={14} />点</Tool>
            <Sep />
            <Tool><Ico name="line" size={14} />直线</Tool>
            <Tool><Ico name="arc" size={14} />三点画弧<Caret $ml={3} /></Tool>
            <Combo $w={55}><span /><ComboArrow><Caret $ml={0} /></ComboArrow></Combo>
            <Tool><Ico name="rect" size={14} />矩形</Tool>
            <Sep />
            <Tool><Ico name="auto" size={14} />自动生成板</Tool>
            <Tool><Ico name="beamSplit" />按梁分割</Tool>
            <Tool><Ico name="section" />设置筏板变截面</Tool>
          </Band>
          <Band>
            <Tool><Ico name="level" size={14} />查改标高</Tool>
          </Band>
        </ToolRow>
        <CanvasWrap><CadCanvas /></CanvasWrap>
        <BottomBand>
          <Grip $mr={1} />
          <Tool><Ico name="ortho" />正交</Tool>
          <Toggle $mr={-4}><Ico name="snap" />对象捕捉</Toggle>
          <Toggle $mr={2}><Ico name="dyn" />动态输入</Toggle>
          <Grip $ml={1} $mr={1} />
          <Tool><Ico name="cross" />交点</Tool>
          <Toggle $mr={-4}><Ico name="perp" />垂点</Toggle>
          <Toggle $mr={1}><Ico name="mid" />中点</Toggle>
          <Tool><Ico name="vertex" />顶点</Tool>
          <Tool $ml={5}><Ico name="coord" />坐标</Tool>
        </BottomBand>
      </WorkArea>
    </Main>

    <StatusBar>
      <StatusCell $w={147} $mono $size={10}>X=34522 Y=7003</StatusCell>
      <StatusCell $w={77}>层高:3.52m</StatusCell>
      <StatusCell $w={97}>底标高:-3.55m</StatusCell>
      <StatusCell $w={47}>0</StatusCell>
      <StatusCell>按鼠标左键选择筏板边线，按右键确定或ESC取消</StatusCell>
      <StatusCell $w={70} $mono $size={11}>418.4 FPS</StatusCell>
    </StatusBar>

    <TaskBar>
      <StartSlot><FaWindows size={16} color="#fff" /></StartSlot>
      <SearchBox>
        <Cortana />
        <SearchText>在这里输入你要搜索的内容</SearchText>
        <Mic size={16} strokeWidth={1.4} />
      </SearchBox>
      <TaskSlot>
        <svg viewBox="0 0 24 24" width="24" height="24">
          <path d="M11 11C4 12 1 8 3 4c2-3 7-3 8 1zM13 11C12 4 16 1 20 3c3 2 3 7-1 8zM13 13c7-1 10 3 8 7-2 3-7 3-8-1zM11 13c1 7-3 10-7 8-3-2-3-7 1-8z" fill="#e8e8e8" />
        </svg>
      </TaskSlot>
      <TaskSlot>
        <svg viewBox="0 0 24 24" width="24" height="24">
          <path d="M19 5C12 0 3 5 3 12c0 6 6 10 11 8 6-2 6-10 0-11-4 0-6 4-4 6 2 1 4 0 4-2" fill="none" stroke="#c8c8c8" strokeWidth="1.8" />
        </svg>
      </TaskSlot>
      <TaskDivider />
      <TaskSlot><FaEdge size={24} color="#0b74d4" /></TaskSlot>
      <TaskSlot>
        <svg viewBox="0 0 24 24" width="24" height="24">
          <path d="M3 7h18v15H3z" fill="#fff" />
          <path d="M8 7c0-6 8-6 8 0" fill="none" stroke="#fff" strokeWidth="1.6" />
          <path d="M8 10h3v3H8zM13 10h3v3h-3zM8 15h3v3H8zM13 15h3v3h-3z" fill="#0a1218" />
        </svg>
      </TaskSlot>
      <TaskSlot>
        <svg viewBox="0 0 24 24" width="24" height="24">
          <path d="M2 4h8l2 3h10v14H2z" fill="#f5d679" />
          <path d="M2 8h20" stroke="#e0b84a" />
          <path d="M7 21v-6h10v6z" fill="#4aa3df" />
        </svg>
      </TaskSlot>
      <TaskSlot $active $open>
        <svg viewBox="0 0 24 24" width="26" height="26">
          <rect x="1" y="1" width="22" height="22" rx="5" fill="#1093ee" />
          <path d="M12 4v16M4 10h16M7 14c0 5 10 5 10 0" fill="none" stroke="#fff" strokeWidth="2" />
        </svg>
      </TaskSlot>
      <TaskSlot $open>
        <svg viewBox="0 0 24 24" width="26" height="26">
          <path d="M20 5C13 2 5 6 5 13c0 5 5 8 9 7 4-1 6-4 5-7h-6" fill="none" stroke="#1d8fe8" strokeWidth="4" />
          <path d="M14 4l8-2-3 6z" fill="#1d8fe8" />
        </svg>
      </TaskSlot>
      <TaskSlot $open>
        <svg viewBox="0 0 24 24" width="26" height="26">
          <circle cx="12" cy="12" r="10" fill="#8ecb3c" />
          <path d="M5 12h14M7 8c3-3 7-3 10 0M7 16c3 3 7 3 10 0" fill="none" stroke="#fff" strokeWidth="2" />
        </svg>
      </TaskSlot>
      <Tray>
        <CpuMeter>27%<br />CPU使用</CpuMeter>
        <TrayCell><ChevronUp size={17} strokeWidth={1.4} /></TrayCell>
        <TrayCell>
          <svg viewBox="0 0 18 16" width="18" height="16">
            <rect x="6" y="4" width="11" height="8" fill="none" stroke="#fff" />
            <rect x="7" y="5" width="7" height="6" fill="#fff" />
            <path d="M2 3v4M5 3v4M1 7h5v2L3.5 11v2" fill="none" stroke="#fff" />
          </svg>
        </TrayCell>
        <TrayCell><Wifi size={16} strokeWidth={1.4} /></TrayCell>
        <TrayCell><Volume2 size={17} strokeWidth={1.4} /></TrayCell>
        <TrayCell>中</TrayCell>
        <TrayCell $w={29}>
          <svg viewBox="0 0 16 16" width="16" height="16">
            <rect x="1" y="1" width="14" height="14" rx="2" fill="#f0521c" transform="rotate(-8 8 8)" />
            <path d="M11 5C8 3 5 4 5 6c0 3 6 2 6 5 0 2-4 2-6 0" fill="none" stroke="#fff" strokeWidth="2" />
          </svg>
        </TrayCell>
        <Clock>19:12<br />2017/6/8</Clock>
        <Notify>
          <svg viewBox="0 0 16 16" width="18" height="18">
            <path d="M1 2h14v10H7l-3 3v-3H1z" fill="#fff" />
            <path d="M4 5h8M4 8h8" stroke="#222" />
          </svg>
          <NotifyBadge>5</NotifyBadge>
        </Notify>
      </Tray>
    </TaskBar>

    <ImeBar>
      <ImeLogo>S</ImeLogo>
      <ImeTray>
        中
        <span>°,</span>
        <Mic size={15} strokeWidth={2.5} />
        <svg viewBox="0 0 16 12" width="16" height="12">
          <rect x="0" y="0" width="16" height="12" rx="2" fill="#1671c4" />
          <path d="M3 3h10M3 6h10M5 9h6" stroke="#fff" strokeDasharray="1.5 1" />
        </svg>
        <svg viewBox="0 0 16 16" width="14" height="14">
          <circle cx="7" cy="4" r="3" fill="#9db0c4" />
          <path d="M1 15c0-6 12-6 12 0z" fill="#9db0c4" />
        </svg>
        <svg viewBox="0 0 16 16" width="14" height="14">
          <path d="M4 1l4 2 4-2 4 4-3 2v8H3V7L0 5z" fill="#1671c4" />
        </svg>
        <svg viewBox="0 0 16 16" width="14" height="14">
          <path d="M15 4a4 4 0 0 1-6 4l-6 7-2-2 7-6a4 4 0 0 1 4-6L9 4l2 2 3-3z" fill="#1671c4" />
        </svg>
      </ImeTray>
    </ImeBar>
    <ScoreBall>56</ScoreBall>

    <Dialog>
      <DialogTitle>
        设置筏板边坡
        <X size={16} strokeWidth={1.3} />
      </DialogTitle>
      <NodeGrid>
        <NodeCard><Node1 /></NodeCard>
        <NodeCard><Node2 /></NodeCard>
        <NodeCard $on><Node3 /></NodeCard>
        <NodeCard><Node4 /></NodeCard>
      </NodeGrid>
      <Preview>
        <LargeNode />
        <SizeInput>300<InputCaret /></SizeInput>
      </Preview>
      <DialogFoot>
        <DialogButton>确定</DialogButton>
        <DialogButton>取消</DialogButton>
      </DialogFoot>
    </Dialog>
  </Page>
);

export default App;
